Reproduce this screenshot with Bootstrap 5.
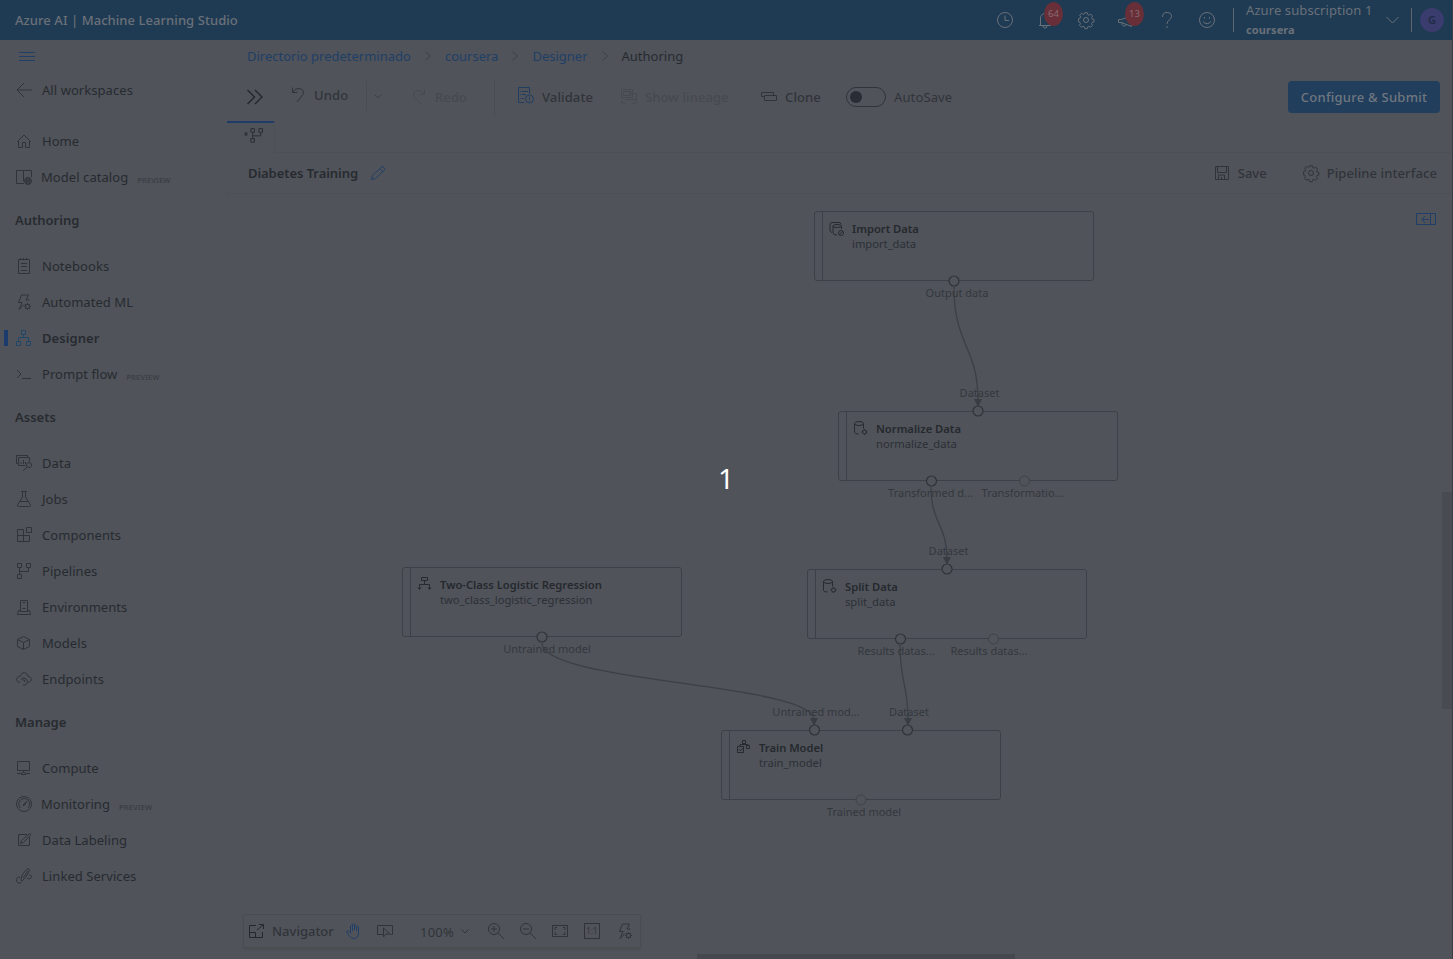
<!DOCTYPE html>
<html lang="en">
<head>
<meta charset="utf-8">
<title>Designer</title>
<link href="https://cdn.jsdelivr.net/npm/bootstrap@5.3.0/dist/css/bootstrap.min.css" rel="stylesheet">
<style>
:root{--bg:#50535a;--ink:#272b30;--mid:#303439;--dim:#3c4045;--blue:#203f66;--line:#484d50}
html,body{height:959px;overflow:hidden}
body{background:var(--bg);color:var(--ink);font-family:"Noto Sans","Open Sans",sans-serif;font-size:13px;line-height:20px}
svg{fill:none;stroke:currentColor;stroke-width:1;display:block;flex:none;overflow:visible}
.topbar{height:40px;background:#1f3b54;color:#6a7078;padding-left:15px}
.topbar .brand{font-weight:500;white-space:nowrap;letter-spacing:.06px}
.topicons{position:relative;gap:24.5px;margin-right:18px}
.count{position:absolute;top:-10px;width:19px;height:24px;border-radius:50%;background:#682f39;color:#8a6a70;font-size:9.5px;line-height:24px;text-align:center}
.vr2{width:1px;height:24px;background:#60666e}
.sub{width:136px;padding-left:12px;white-space:nowrap;line-height:20px;letter-spacing:.1px}
.avatar{width:24px;height:24px;border-radius:50%;background:#393c6c;color:#202b45;font-size:11px;font-weight:600;text-align:center;line-height:24px;margin:0 9px 0 8px}
.side{width:227px;height:919px}
.side .item{height:36px;display:flex;align-items:center;padding-left:16px;position:relative;white-space:nowrap;letter-spacing:.06px}
.side .item svg{margin-right:10px;color:#303439}
.side .head{font-weight:600;padding-left:15px;height:20px;white-space:nowrap;margin:15px 0 18px}
.tag{font-size:7.600px;font-weight:600;color:#3c4045;margin:5px 0 0 9px;line-height:10px}
.marker{position:absolute;left:4px;top:10px;width:4px;height:16px;background:#1b3b6c}
.main{width:1226px;height:919px;position:relative}
.crumbs{height:33px;padding:0 0 2px 20px;white-space:nowrap}
.crumbs a:not([href]){color:var(--blue)}
.crumbs svg{margin:0 14px;color:var(--dim)}
.tools{height:48px;position:relative;color:var(--mid);font-weight:500;letter-spacing:.12px}
.tool{position:absolute;display:flex;align-items:center;height:20px;white-space:nowrap}
.sep{width:1px;background:var(--line);position:absolute}
.submit{position:absolute;left:1061px;top:8px;width:152px;height:32px;border-radius:4px;background:#213e5d;color:#70777f;text-align:center;line-height:32px;white-space:nowrap;letter-spacing:.25px}
.tabs{height:32px;border-bottom:1px dotted var(--line)}
.tabon{width:48px;height:32px;border-right:1px dotted var(--line);background:linear-gradient(#203b68,#203b68) 0 0/47px 2px no-repeat var(--bg)}
.titlebar{height:41px;border-bottom:1px dotted var(--line);padding:0 16px 0 21px;white-space:nowrap;color:var(--mid);font-weight:500}
.titlebar b{font-weight:600;color:var(--ink);letter-spacing:-.06px}
.canvas{position:absolute;left:-227px;top:-40px;width:1453px;height:959px;pointer-events:none}
.node{position:absolute;width:280px;height:70px;border:1px solid #3b4148;border-radius:3px;font-size:11.2px;line-height:15px;white-space:nowrap;padding:9px 0 0 37px}
.node:before{content:"";position:absolute;left:7px;top:0;bottom:0;width:1px;background:#3b4148}
.node b{display:block;font-weight:600;color:#25292e}
.node span{display:block;color:#2c3036}
.node svg{position:absolute;left:14px;top:9px}
.port{position:absolute;font-size:11px;line-height:14px;color:#34383d;white-space:nowrap;transform:translateX(-50%)}
.dock{position:absolute;left:16px;top:874px;width:398px;height:34px;border:1px solid var(--line);border-radius:2px;box-shadow:0 2px 2px #4b4e53;color:var(--mid)}
.dock .tool{top:6px}
.countdown{position:absolute;left:718px;top:460px;color:#fff;font-size:28px;line-height:36px}
</style>
</head>
<body>
<header class="topbar d-flex align-items-center">
 <span class="brand me-auto">Azure AI | Machine Learning Studio</span>
 <div class="topicons d-flex align-items-center">
  <svg width="16" height="16"><circle cx="8" cy="8" r="7.5"/><path d="M8 3.500V8.500h4"/></svg>
  <svg width="16" height="16"><path d="M2 13.500h12M3.500 13V6a4.500 4.500 0 0 1 9 0v7M6 14a2 2 0 0 0 4 0"/></svg>
  <svg width="16" height="16"><use href="#gear"/></svg>
  <svg width="16" height="16"><path d="M.5 7.500h3l10-4v11l-10-4h-3zM4 10.500v2l2 2 2.500-2"/></svg>
  <svg width="16" height="16"><path d="M3.500 5Q3.500.5 8 .5T12.500 4.500q0 2-2.250 3.500T8 12M8 14v2"/></svg>
  <svg width="16" height="16"><circle cx="8" cy="8" r="7.500"/><path d="M5.500 5v1.500M10.500 5v1.500M4 9.500q4 4.500 8 0"/></svg>
  <span class="count" style="left:47.500px">64</span><span class="count" style="left:128.500px">13</span>
 </div>
 <div class="vr2"></div>
 <div class="sub"><div>Azure subscription 1</div><div class="fw-bold" style="font-size:11px">coursera</div></div>
 <svg class="ms-3" width="13" height="8" style="margin-right:12px"><path d="M.5 1l6 6 6-6"/></svg>
 <div class="vr2"></div><div class="avatar">G</div>
</header>

<div class="d-flex">
<nav class="side">
 <div style="height:32px;padding:11px 0 0 19px;color:#203f66"><svg width="16" height="10"><path d="M0 1.500h16M0 5.500h16M0 9.500h16"/></svg></div>
 <div class="item"><svg width="16" height="16"><path d="M16 8H1M8 1L1 8l7 7"/></svg>All workspaces</div>
 <div style="height:15px"></div>
 <div class="item"><svg width="16" height="16"><path d="M1.500 8.500L8 2 14.500 8.500M2.500 7.500v7h4v-5h3v5h4v-7"/></svg>Home</div>
 <div class="item"><svg width="16" height="16" style="margin-right:9px"><path d="M8 14.500H.5v-13h15V8M7.500 1.500v11"/><circle cx="12" cy="12" r="3.500"/><path d="M8 12h8M12 8v8M10.500 9v6M13.500 9v6"/></svg>Model catalog<span class="tag">PREVIEW</span></div>
 <div class="head">Authoring</div>
 <div class="item"><svg width="16" height="16"><path d="M2.500 1.500h11v14h-11zM5 5.500h6M5 8.500h6M5 12.500h6M4.500 0v2M7.500 0v2M10.500 0v2"/></svg>Notebooks</div>
 <div class="item"><svg width="16" height="16"><use href="#bolt"/></svg>Automated ML</div>
 <div class="item fw-semibold"><span class="marker"></span><svg width="16" height="16" style="color:#204668"><path d="M5.500.5h4v4h-4zM.5 11.500h4v4h-4zM10.500 11.500h4v4h-4zM7.500 5v3M2.500 11V7.500h10V11"/></svg>Designer</div>
 <div class="item"><svg width="16" height="16"><path d="M1 4l4 4-4 4M6 12.500h9"/></svg>Prompt flow<span class="tag">PREVIEW</span></div>
 <div class="head">Assets</div>
 <div class="item"><svg width="16" height="16"><path d="M2.500 8.500H.5v-8h11v2M2.500 10.500v-8h11v4M2.500 10.500h7M5 9V7M7.500 9V5M9.500 9V7"/><circle cx="13" cy="10" r="2.500"/><path d="M11 12l-4 4"/></svg>Data</div>
 <div class="item"><svg width="16" height="16"><path d="M5 .5h6M6.500.5V6l-5 8q0 1.500 1 1.500h11q1 0 1-1.500l-5-8V.5M4 10.500h8"/></svg>Jobs</div>
 <div class="item"><svg width="16" height="16"><path d="M1.500 2.500h6v12h-6zM1.500 8.500h12v6h-12M10.500.5h5v5h-5z"/></svg>Components</div>
 <div class="item"><svg width="16" height="16"><use href="#pipe"/></svg>Pipelines</div>
 <div class="item"><svg width="16" height="16"><path d="M4.500 12V1.500h7V12M6.500 3.500h3M6.500 9.500h3M4 12.500h8M4 11.500H2.500l-1 4h13l-1-4H12"/></svg>Environments</div>
 <div class="item"><svg width="16" height="16"><path d="M7.500 1.500l6 3v7l-6 3-6-3v-7zM1.500 4.500l6 3 6-3M7.500 7.500v7"/></svg>Models</div>
 <div class="item"><svg width="16" height="16"><path d="M4 11.500C-1 11 0 5 4 5.500 5 0 12 1 12 5.500c4 0 5 5 0 6M5 8.500A3.500 3.500 0 1 1 7 14M6.500 9h2v2"/></svg>Endpoints</div>
 <div class="head">Manage</div>
 <div class="item"><svg width="16" height="16"><path d="M1.500 1.500h12v9h-12zM7.500 10.500v2M1 13.500h4l2.500-1.500 2.500 1.500h4M5 14.500h5"/></svg>Compute</div>
 <div class="item"><svg width="16" height="16" style="margin-right:9px"><circle cx="8" cy="8" r="7.500"/><path d="M4.500 12A5.500 5.500 0 1 1 12 12M7 9l4-4-3 5z"/></svg>Monitoring<span class="tag">PREVIEW</span></div>
 <div class="item"><svg width="16" height="16"><path d="M11 2.500H2.500v11h11V5M4.500 11.500l1-3 8-7 1.500 1-7.500 8z"/></svg>Data Labeling</div>
 <div class="item"><svg width="16" height="16"><path d="M5 12q0-6 7-11.500 2 0 1 3Q10 10 6 13zM7 10l5-7M4 9Q-.5 9.500.5 13q2 4 5 1M13 7q3.500 0 2 3-2 2-4 0"/></svg>Linked Services</div>
</nav>

<main class="main">
 <div class="crumbs d-flex align-items-center">
  <a>Directorio predeterminado</a><svg width="6" height="10"><path d="M.5.5L5.500 5l-5 4.500"/></svg>
  <a>coursera</a><svg width="6" height="10"><path d="M.5.5L5.500 5l-5 4.500"/></svg>
  <a>Designer</a><svg width="6" height="10"><path d="M.5.5L5.500 5l-5 4.500"/></svg>
  <span>Authoring</span>
 </div>
 <div class="tools">
  <svg class="tool" style="left:20px;top:16px;height:16px;color:#24282d" width="16" height="16"><path stroke-width="1.400" d="M.5 1l7 7-7 7M8 1l7 7-7 7"/></svg>
  <div class="tool" style="left:65px;top:12px"><svg width="12" height="16" style="margin-right:10px"><path d="M.5.5v5h5M1 5Q3 1 7 1.500q6 1 4 6L5 15"/></svg>Undo</div>
  <div class="sep" style="left:139px;top:8px;height:30px"></div>
  <svg class="tool" style="left:147px;top:21px;height:5px;color:#3c4046" width="8" height="5"><path d="M.5.5L4 4 7.500.5"/></svg>
  <div class="tool" style="left:186px;top:14px;color:#464a50"><svg width="12" height="16" style="margin-right:10px"><path d="M11.500.5v5h-5M11 5Q9 1 5 1.500q-6 1-4 6L8 15"/></svg>Redo</div>
  <div class="sep" style="left:267px;top:6px;height:37px"></div>
  <div class="tool" style="left:291px;top:14px"><svg width="16" height="16" style="margin-right:8px;color:#203f60"><path d="M6 13.500H.5V-1.500h11V5M2 2.500h1M4 2.500h6M2 5.500h1M4 5.500h4M2 9.500h1M4 9.500h2"/><circle cx="11.500" cy="10" r="4"/><path d="M11.500 7.500v3M11.500 11.500v1"/></svg>Validate</div>
  <div class="tool" style="left:394px;top:14px;color:#464a50"><svg width="16" height="16" style="margin-right:8px"><path d="M.5.5h11v8H.5zM2.500 2.500h7v4h-7zM8 4.500h7.500v6H5M1 11v3h3M11 14h4v-3"/></svg>Show lineage</div>
  <div class="tool" style="left:534px;top:14px"><svg width="16" height="16" style="margin-right:8px"><path d="M3.500 7.500H.5v-4h12v3M3.500 6.500h12v5h-12z"/></svg>Clone</div>
  <svg class="tool" style="left:619px;top:14px" width="40" height="20"><rect x=".5" y=".5" width="39" height="19" rx="9.500"/><circle cx="10" cy="10" r="6" fill="#282c35" stroke="none"/></svg>
  <div class="tool fw-normal" style="left:667px;top:14px">AutoSave</div>
  <div class="submit">Configure &amp; Submit</div>
 </div>
 <div class="tabs"><div class="tabon"><svg style="margin-left:17px;padding-top:8px;height:26px" width="20" height="26"><path d="M0 5h4M1 3l2 4M3 3L1 7" stroke-width=".7"/><g transform="translate(5.500 -.8) scale(.9)"><use href="#pipe"/></g></svg></div></div>
 <div class="titlebar d-flex align-items-center"><b>Diabetes Training</b>
  <svg class="me-auto" style="margin-left:13px;color:#203f66" width="14" height="14"><path d="M.5 13.500l1-4 8.500-8q2-2 3 0 2 1 0 3l-8.500 8zM9 3l3 3"/></svg>
  <svg width="14" height="14" style="margin-right:9px"><path d="M.5.5h13v13H.5zM2.500.5v6h9v-6M3.500 13v-4h6v4M6.500 13v-2"/></svg>Save
  <svg width="16" height="16" style="margin:0 8px 0 36px"><use href="#gear"/></svg><span style="letter-spacing:.1px">Pipeline interface</span></div>

 <div class="canvas">
  <svg class="position-absolute" width="1453" height="959" style="color:#3b4046">
   <g stroke-width="1.300"><path d="M954 287C954 346 978 346 978 401M931 487C931 524 947 524 947 559M900 645C900 683 908 683 908 720M542 643C542 683 814 683 814 720"/></g>
   <g fill="#383d43" stroke="none"><path d="M974 399h8l-4 8zM943 557h8l-4 8zM904 718h8l-4 8zM810 718h8l-4 8z"/></g>
   <g color="#203f66"><path stroke="#203f66" d="M1416.500 213.500h19v11h-19zM1430.500 213.500v11M1429 219.500h-7M1425 216l-3 3.500 3 3.500"/></g>
  </svg>
  <div class="node" style="left:814px;top:211px"><svg width="16" height="16"><path d="M3 11.500Q1 11 1 9V4q0-2.500 2-2.500h7q2 0 2 2M4 5q0-1.500 4-1.500T12.500 5 8 6.500 4 5v7q0 2 4 2M12.500 5v3"/><circle cx="12" cy="12" r="2.500"/><path d="M10 14l4-4"/></svg><b>Import Data</b><span>import_data</span></div>
  <div class="node" style="left:838px;top:411px"><svg width="16" height="16"><use href="#cyl"/></svg><b>Normalize Data</b><span>normalize_data</span></div>
  <div class="node" style="left:807px;top:569px"><svg width="16" height="16"><use href="#cyl"/></svg><b>Split Data</b><span>split_data</span></div>
  <div class="node" style="left:402px;top:567px"><svg width="16" height="16" style="top:8px"><path d="M4.500 1.500h6v3h-6zM7.500 5v4M2.500 13V8.500h10V13M1 11.500l1.500 2 1.500-2M11 11.500l1.500 2 1.500-2"/></svg><b>Two-Class Logistic Regression</b><span>two_class_logistic_regression</span></div>
  <div class="node" style="left:721px;top:730px"><svg width="16" height="16" style="top:8px"><path d="M6.500 1.500h3v3h-3zM1.500 7.500h6v6h-6zM10.500 6.500h3v3h-3zM8 5v1.500M4 7V5.500h8v1M3 10l1.500 2L7 9"/></svg><b>Train Model</b><span>train_model</span></div>
  <svg class="position-absolute" width="1453" height="959" style="left:0;top:0"><g fill="#50535a" stroke="#2f343a" stroke-width="1.200"><circle cx="954" cy="281" r="5"/><circle cx="978" cy="411" r="5"/><circle cx="931.500" cy="481" r="5"/><circle cx="947" cy="569" r="5"/><circle cx="900.500" cy="639" r="5"/><circle cx="542" cy="637" r="5"/><circle cx="814.500" cy="730" r="5"/><circle cx="907.500" cy="730" r="5"/></g><g fill="#50535a" stroke="#3f444a"><circle cx="1024.500" cy="481" r="5"/><circle cx="993.500" cy="639" r="5"/><circle cx="861" cy="800" r="5"/></g></svg>
  <span class="port" style="left:957px;top:286px">Output data</span><span class="port" style="left:979.500px;top:386px">Dataset</span>
  <span class="port" style="left:930.500px;top:486px">Transformed d...</span><span class="port" style="left:1022.500px;top:486px">Transformatio...</span>
  <span class="port" style="left:948.500px;top:544px">Dataset</span><span class="port" style="left:896px;top:644px">Results datas...</span><span class="port" style="left:989px;top:644px">Results datas...</span>
  <span class="port" style="left:547px;top:642px">Untrained model</span><span class="port" style="left:816px;top:705px">Untrained mod...</span><span class="port" style="left:909px;top:705px">Dataset</span><span class="port" style="left:864px;top:805px">Trained model</span>
  <div class="countdown">1</div>
 </div>
 <div class="dock">
  <div class="tool fw-medium" style="left:5px"><svg width="15" height="14" style="margin-right:8px;color:#24282d"><path d="M7 1.500H.5v12h13V8M.5 8.500h6v5M8 6l6-5M10 .5h4.500V5"/></svg>Navigator</div>
  <svg class="tool" style="left:102px;top:8px;height:16px;color:#203f66" width="16" height="16"><use href="#hand"/></svg>
  <svg class="tool" style="left:133px;top:8px;height:16px" width="16" height="16"><path d="M6 11.500H.5v-9h15v9h-2M6.500 5v9l2.500-3h4z"/></svg>
  <div class="tool" style="left:176px;top:7px;letter-spacing:.2px">100%</div>
  <svg class="tool" style="left:217px;top:14px;height:5px" width="8" height="5"><path d="M.5.5L4 4 7.500.5"/></svg>
  <svg class="tool" style="left:244px;top:8px;height:16px" width="16" height="16"><circle cx="6" cy="6" r="5.500"/><path d="M10 10l6 6M3 6h6M6 3v6"/></svg>
  <svg class="tool" style="left:276px;top:8px;height:16px" width="16" height="16"><circle cx="6" cy="6" r="5.500"/><path d="M10 10l6 6M3 6h6"/></svg>
  <svg class="tool" style="left:308px;top:8px;height:16px" width="16" height="16"><path d="M.5 2.500h15v11H.5zM3 7V4.500h2M11 4.500h2V7M3 9v2.500h2M11 11.500h2V9"/></svg>
  <div class="tool" style="left:340px;top:8px;width:16px;height:16px;border:1px solid;font-size:8px;line-height:14px;justify-content:center">1:1</div>
  <svg class="tool" style="left:373px;top:8px;height:16px" width="16" height="16"><use href="#bolt"/></svg>
 </div>
 <div class="position-absolute" style="left:1215px;top:452px;width:10px;height:217px;background:#484b51"></div>
 <div class="position-absolute" style="left:470px;top:914px;width:318px;height:5px;background:#45484e"></div>
 <div class="position-absolute" style="left:1225px;top:-40px;width:1px;height:959px;background:#393e47"></div>
</main>
</div>
<svg width="0" height="0" class="position-absolute"><defs>
 <g id="gear"><circle cx="8" cy="8" r="2.500"/><path d="M6.700.5h2.600l.5 2 1.300.6 1.800-1.100 2 2-1.100 1.800.5 1.300 2 .5v2.600l-2 .5-.6 1.200 1.100 1.800-2 2-1.800-1.100-1.200.6-.5 2H6.700l-.5-2L5 14.600l-1.800 1.100-2-2 1.100-1.800-.5-1.200-1.500-.5V6.700l1.600-.5.6-1.300L1.400 3.100l2-2 1.800 1.100 1.200-.5z" transform="translate(.3 .2) scale(.96)"/></g>
 <g id="bolt"><path d="M5.500 1h7l-2.500 5h3.500M5.500 1L2.500 8.500h3.500l-3 7 5-5"/><circle cx="11.500" cy="12.500" r="2"/><path d="M11.500 9v1.500M11.500 14.500V16M8 12.500h1.500M13.500 12.500H15M9 10l1 1M13 14l1 1M14 10l-1 1M9 15l1-1"/></g>
 <g id="pipe"><path d="M1.500.5h4v4h-4zM10.500.5h4v4h-4zM1.500 11.500h4v4h-4zM3.500 5v6M3.500 8.500h9V5"/></g>
 <g id="cyl"><path d="M1.500 2.500q0-2 4.500-2t4.500 2T6 4.500 1.500 2.500v9q0 1.500 4 1.500M10.500 2.500v5"/><circle cx="11.500" cy="11" r="2"/><path d="M11.500 8v1M11.500 13v1M8.500 11h1M13.500 11h1M9.500 9l.5.5M13 12.500l.5.5M13.500 9l-.5.5"/></g>
 <g id="hand"><path d="M4.500 10V3q1-1.500 2 0v5M6.500 7V1.500q1-1.500 2 0V7M8.500 3q1-1.500 2 0v5M10.500 4q1-1.500 2 0v7q-1 4.500-4.500 4.500-3 0-5-3l-2.500-4q1-1.500 2.500 0l2 2"/></g>
</defs></svg>
<script src="https://cdn.jsdelivr.net/npm/bootstrap@5.3.0/dist/js/bootstrap.bundle.min.js"></script>
</body>
</html>
